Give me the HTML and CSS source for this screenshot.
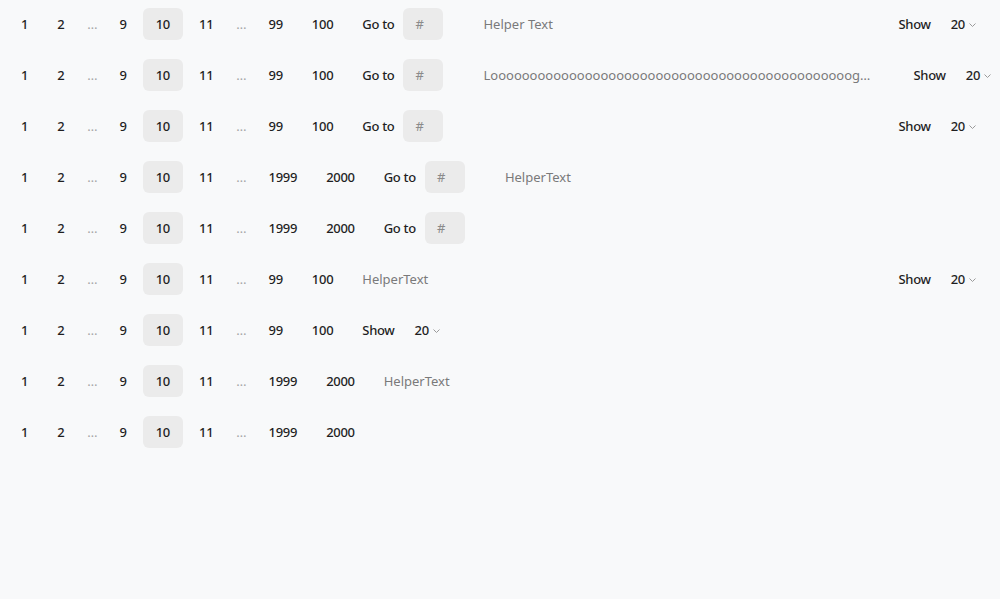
FILE: index.html
```html
<!DOCTYPE html>
<html>
<head>
<meta charset="utf-8">
<link rel="stylesheet" href="styles.css">
</head>
<body>
<div class="list">

  <div class="row">
    <div class="pages">
      <span class="pg">1</span><span class="pg">2</span><span class="dots">…</span><span class="pg">9</span><span class="pg active">10</span><span class="pg">11</span><span class="dots">…</span><span class="pg">99</span><span class="pg">100</span>
    </div>
    <div class="goto"><span class="goto-label">Go to</span><span class="goto-input">#</span></div>
    <span class="helper after-goto">Helper Text</span>
    <div class="show"><span class="show-label">Show</span><span class="select">20<svg class="chev" width="7" height="4" viewBox="0 0 7 4"><path d="M0.5 0.5 L3.5 3.5 L6.5 0.5" fill="none" stroke="#9a9a9a" stroke-width="1"/></svg></span></div>
  </div>

  <div class="row">
    <div class="pages">
      <span class="pg">1</span><span class="pg">2</span><span class="dots">…</span><span class="pg">9</span><span class="pg active">10</span><span class="pg">11</span><span class="dots">…</span><span class="pg">99</span><span class="pg">100</span>
    </div>
    <div class="goto"><span class="goto-label">Go to</span><span class="goto-input">#</span></div>
    <span class="helper after-goto long">Loooooooooooooooooooooooooooooooooooooooooooooog…</span>
    <div class="show"><span class="show-label">Show</span><span class="select">20<svg class="chev" width="7" height="4" viewBox="0 0 7 4"><path d="M0.5 0.5 L3.5 3.5 L6.5 0.5" fill="none" stroke="#9a9a9a" stroke-width="1"/></svg></span></div>
  </div>

  <div class="row">
    <div class="pages">
      <span class="pg">1</span><span class="pg">2</span><span class="dots">…</span><span class="pg">9</span><span class="pg active">10</span><span class="pg">11</span><span class="dots">…</span><span class="pg">99</span><span class="pg">100</span>
    </div>
    <div class="goto"><span class="goto-label">Go to</span><span class="goto-input">#</span></div>
    <div class="show"><span class="show-label">Show</span><span class="select">20<svg class="chev" width="7" height="4" viewBox="0 0 7 4"><path d="M0.5 0.5 L3.5 3.5 L6.5 0.5" fill="none" stroke="#9a9a9a" stroke-width="1"/></svg></span></div>
  </div>

  <div class="row">
    <div class="pages">
      <span class="pg">1</span><span class="pg">2</span><span class="dots">…</span><span class="pg">9</span><span class="pg active">10</span><span class="pg">11</span><span class="dots">…</span><span class="pg">1999</span><span class="pg">2000</span>
    </div>
    <div class="goto"><span class="goto-label">Go to</span><span class="goto-input">#</span></div>
    <span class="helper after-goto">HelperText</span>
  </div>

  <div class="row">
    <div class="pages">
      <span class="pg">1</span><span class="pg">2</span><span class="dots">…</span><span class="pg">9</span><span class="pg active">10</span><span class="pg">11</span><span class="dots">…</span><span class="pg">1999</span><span class="pg">2000</span>
    </div>
    <div class="goto"><span class="goto-label">Go to</span><span class="goto-input">#</span></div>
  </div>

  <div class="row">
    <div class="pages">
      <span class="pg">1</span><span class="pg">2</span><span class="dots">…</span><span class="pg">9</span><span class="pg active">10</span><span class="pg">11</span><span class="dots">…</span><span class="pg">99</span><span class="pg">100</span>
    </div>
    <span class="helper">HelperText</span>
    <div class="show"><span class="show-label">Show</span><span class="select">20<svg class="chev" width="7" height="4" viewBox="0 0 7 4"><path d="M0.5 0.5 L3.5 3.5 L6.5 0.5" fill="none" stroke="#9a9a9a" stroke-width="1"/></svg></span></div>
  </div>

  <div class="row">
    <div class="pages">
      <span class="pg">1</span><span class="pg">2</span><span class="dots">…</span><span class="pg">9</span><span class="pg active">10</span><span class="pg">11</span><span class="dots">…</span><span class="pg">99</span><span class="pg">100</span>
    </div>
    <div class="show inline"><span class="show-label">Show</span><span class="select">20<svg class="chev" width="7" height="4" viewBox="0 0 7 4"><path d="M0.5 0.5 L3.5 3.5 L6.5 0.5" fill="none" stroke="#9a9a9a" stroke-width="1"/></svg></span></div>
  </div>

  <div class="row">
    <div class="pages">
      <span class="pg">1</span><span class="pg">2</span><span class="dots">…</span><span class="pg">9</span><span class="pg active">10</span><span class="pg">11</span><span class="dots">…</span><span class="pg">1999</span><span class="pg">2000</span>
    </div>
    <span class="helper">HelperText</span>
  </div>

  <div class="row">
    <div class="pages">
      <span class="pg">1</span><span class="pg">2</span><span class="dots">…</span><span class="pg">9</span><span class="pg active">10</span><span class="pg">11</span><span class="dots">…</span><span class="pg">1999</span><span class="pg">2000</span>
    </div>
  </div>

</div>
</body>
</html>
```

FILE: styles.css
```css
html, body {
  background: #f8f9fa;
}
body {
  margin: 8px;
  font-family: "Noto Sans", "Open Sans", sans-serif;
  font-size: 13px;
  color: #1f1f1f;
}
.list {
  display: flex;
  flex-direction: column;
  gap: 19px;
}
.row {
  display: flex;
  align-items: center;
  height: 32px;
  gap: 16px;
  padding-right: 8px;
  white-space: nowrap;
}
.pages {
  display: flex;
  align-items: center;
  gap: 3px;
  flex: none;
}
.pg {
  height: 32px;
  padding: 0 13px;
  display: flex;
  align-items: center;
  justify-content: center;
  border-radius: 6px;
  font-weight: 500;
  letter-spacing: -0.3px;
  color: #1f1f1f;
}
.pg.active {
  background: #ebebeb;
  min-width: 40px;
  box-sizing: border-box;
}
.dots {
  height: 32px;
  padding: 0 6px 0 7px;
  display: flex;
  align-items: center;
  color: #a6a6a6;
}
.goto {
  display: flex;
  align-items: center;
  gap: 9px;
  flex: none;
}
.goto-label {
  font-weight: 500;
  letter-spacing: -0.3px;
}
.goto-input {
  width: 40px;
  height: 32px;
  box-sizing: border-box;
  padding-left: 12px;
  display: flex;
  align-items: center;
  background: #ebebeb;
  border-radius: 6px;
  color: #8a8a8a;
}
.helper {
  color: #7a7a7a;
  flex: none;
}
.helper.after-goto {
  margin-left: 24px;
}
.helper.long {
  width: 390px;
  overflow: hidden;
}
.show {
  margin-left: auto;
  display: flex;
  align-items: center;
  gap: 12px;
  flex: none;
}
.show.inline {
  margin-left: 0;
}
.row .helper.long + .show {
  margin-left: 24px;
}
.show-label {
  font-weight: 500;
  letter-spacing: -0.3px;
}
.select {
  display: flex;
  align-items: center;
  gap: 4px;
  padding: 0 8px;
  height: 32px;
  font-weight: 500;
  letter-spacing: -0.3px;
}
.chev {
  display: block;
  margin-top: 1px;
}
```
